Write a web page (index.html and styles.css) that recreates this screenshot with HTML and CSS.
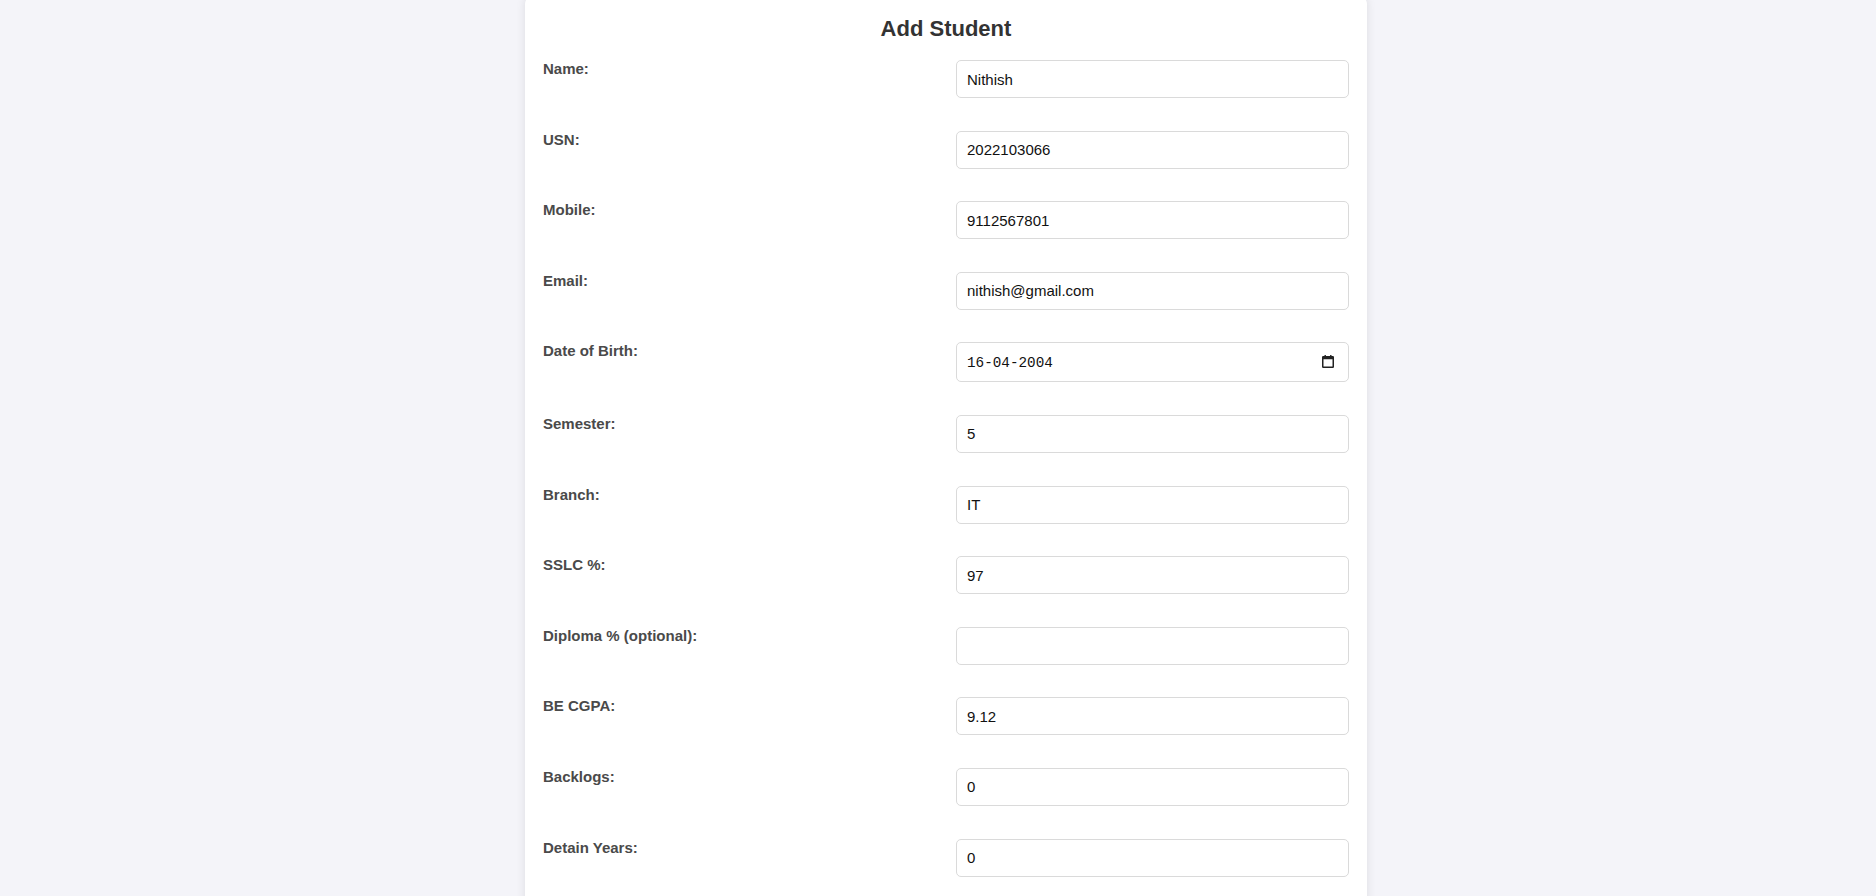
FILE: index.html
```html
<!DOCTYPE html>
<html lang="en">
<head>
<meta charset="utf-8">
<title>Add Student</title>
<link rel="stylesheet" href="styles.css">
</head>
<body>
<div class="card">
  <h2 class="title">Add Student</h2>
  <form class="form">
    <label class="label">Name:</label>
    <input class="field" type="text" value="Nithish">
    <label class="label">USN:</label>
    <input class="field" type="text" value="2022103066">
    <label class="label">Mobile:</label>
    <input class="field" type="text" value="9112567801">
    <label class="label">Email:</label>
    <input class="field" type="text" value="nithish@gmail.com">
    <label class="label">Date of Birth:</label>
    <div class="date-wrap">
      <input class="field date" type="text" value="16-04-2004">
      <svg class="cal" width="12" height="13" viewBox="0 0 12 13">
        <rect x="0.75" y="1.75" width="10.5" height="10.5" rx="0.5" fill="none" stroke="#222" stroke-width="1.5"/>
        <rect x="0.75" y="1.75" width="10.5" height="2.5" fill="#222"/>
        <rect x="2.5" y="0" width="1.4" height="2" fill="#222"/>
        <rect x="8.1" y="0" width="1.4" height="2" fill="#222"/>
      </svg>
    </div>
    <label class="label">Semester:</label>
    <input class="field" type="text" value="5">
    <label class="label">Branch:</label>
    <input class="field" type="text" value="IT">
    <label class="label">SSLC %:</label>
    <input class="field" type="text" value="97">
    <label class="label">Diploma % (optional):</label>
    <input class="field" type="text" value="">
    <label class="label">BE CGPA:</label>
    <input class="field" type="text" value="9.12">
    <label class="label">Backlogs:</label>
    <input class="field" type="text" value="0">
    <label class="label">Detain Years:</label>
    <input class="field" type="text" value="0">
  </form>
</div>
</body>
</html>
```
FILE: styles.css
```css
html, body {
  margin: 0;
  padding: 0;
}
body {
  background: #f4f4f9;
  font-family: "Liberation Sans", Arial, sans-serif;
  padding-left: 16px;
  height: 896px;
  overflow: hidden;
}
.card {
  width: 806px;
  margin: -4px auto 0;
  padding: 20px 18px 40px;
  background: #ffffff;
  border-radius: 8px;
  box-shadow: 0 0 10px rgba(0, 0, 0, 0.1);
}
.title {
  margin: 0 0 18px;
  text-align: center;
  font-size: 22px;
  font-weight: bold;
  color: #333333;
}
.form {
  display: grid;
  grid-template-columns: 1fr 1fr;
  column-gap: 20px;
  row-gap: 32.6px;
}
.label {
  align-self: start;
  font-size: 15px;
  font-weight: bold;
  color: #4a4a4a;
}
.field {
  box-sizing: border-box;
  width: 100%;
  height: 38px;
  margin: 0;
  padding: 0 10px;
  border: 1px solid #dadada;
  border-radius: 5px;
  background: #fff;
  font-family: "Liberation Sans", Arial, sans-serif;
  font-size: 15px;
  color: #111;
  outline: none;
}
.date-wrap {
  position: relative;
}
.field.date {
  height: 40px;
  font-family: "Liberation Mono", "DejaVu Sans Mono", monospace;
  font-size: 14.3px;
  padding-top: 1px;
}
.cal {
  position: absolute;
  right: 15px;
  top: 13px;
}
```
